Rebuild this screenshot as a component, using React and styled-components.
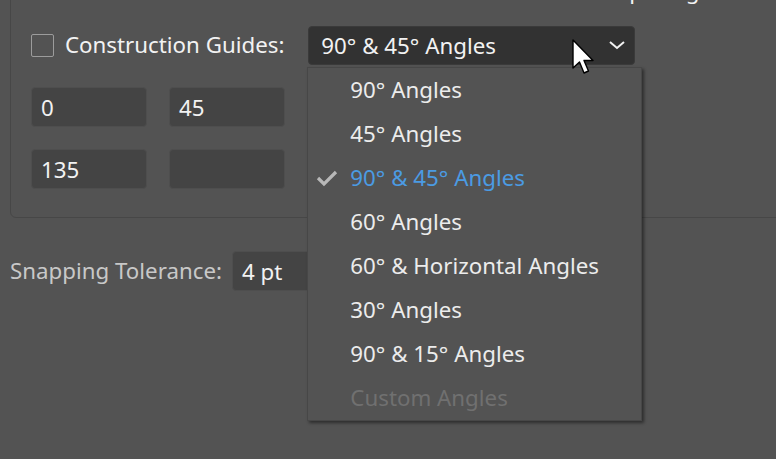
import styled, { createGlobalStyle } from "styled-components";

const GlobalStyle = createGlobalStyle`
  html, body {
    margin: 0;
    padding: 0;
    background: #535353;
    overflow: hidden;
  }
  body {
    font-family: "Noto Sans", "Open Sans", sans-serif;
  }
`;

const Page = styled.div`
  width: 776px;
  height: 459px;
  overflow: hidden;
  background: #535353;
  color: #f0f0f0;
  font-size: 22.3px;
`;

const Group = styled.div`
  margin: -40px 0 0 10px;
  width: 820px;
  border: 1px solid #474747;
  border-radius: 6px;
  padding: 0 0 28px 20px;
  box-sizing: border-box;
`;

const TopRow = styled.div`
  display: flex;
  align-items: center;
  height: 60px;
  margin-bottom: 4px;
  padding-left: 552px;
`;

const GuideRow = styled.div`
  display: flex;
  align-items: center;
  height: 40px;
`;

const Check = styled.span`
  width: 21px;
  height: 21px;
  border: 1px solid #9c9c9c;
  border-radius: 2px;
  box-sizing: content-box;
  flex: none;
  margin-bottom: ${(p) => (p.$raised ? "14px" : "0")};
`;

const Label = styled.span`
  margin-left: ${(p) => (p.$muted ? "0" : "11px")};
  color: ${(p) => (p.$muted ? "#c8c8c8" : "#f2f2f2")};
  white-space: nowrap;
  line-height: 1;
`;

const SelectWrap = styled.div`
  position: relative;
  margin-left: 24px;
`;

const Select = styled.div`
  width: 327px;
  height: 39px;
  box-sizing: border-box;
  display: flex;
  align-items: center;
  justify-content: space-between;
  padding: 0 8px 0 12px;
  background: #323232;
  border: 1px solid #3a3a3a;
  border-radius: 4px;
  color: #f2f2f2;
`;

const Menu = styled.ul`
  position: absolute;
  top: 41px;
  left: -1px;
  width: 333px;
  margin: 0;
  padding: 0;
  list-style: none;
  background: #535353;
  border: 1px solid #474747;
  box-shadow: 2px 2px 3px rgba(0, 0, 0, 0.45);
  z-index: 2;
`;

const Item = styled.li`
  height: 44px;
  display: flex;
  align-items: center;
  padding-left: 42px;
  position: relative;
  color: ${(p) => (p.$selected ? "#4b9be3" : p.$disabled ? "#707070" : "#ececec")};
`;

const Tick = styled.svg`
  position: absolute;
  left: 8px;
  top: 13px;
`;

const Inputs = styled.div`
  display: grid;
  grid-template-columns: repeat(4, 116px);
  gap: 22px 22px;
  margin-top: 22px;
`;

const Field = styled.div`
  height: 40px;
  box-sizing: border-box;
  background: #444444;
  border: 1px solid #4e4e4e;
  border-radius: 4px;
  padding-left: 9px;
  display: flex;
  align-items: center;
  color: #f2f2f2;
  width: ${(p) => p.$w || "auto"};
`;

const ToleranceRow = styled.div`
  display: flex;
  align-items: center;
  margin: 33px 0 0 10px;
  gap: 10px;
`;

const Cursor = styled.svg`
  position: absolute;
  left: 264px;
  top: 13px;
  z-index: 3;
`;

const items = [
  { text: "90° Angles" },
  { text: "45° Angles" },
  { text: "90° & 45° Angles", selected: true },
  { text: "60° Angles" },
  { text: "60° & Horizontal Angles" },
  { text: "30° Angles" },
  { text: "90° & 15° Angles" },
  { text: "Custom Angles", disabled: true },
];

export default function App() {
  return (
    <Page>
      <GlobalStyle />
      <Group>
        <TopRow>
          <Check $raised />
          <Label>Spacing Guides</Label>
        </TopRow>
        <GuideRow>
          <Check />
          <Label>Construction Guides:</Label>
          <SelectWrap>
            <Select>
              <span>90° &amp; 45° Angles</span>
              <svg width="18" height="10" viewBox="0 0 18 10">
                <path d="M2 2 L9 8 L16 2" fill="none" stroke="#f2f2f2" strokeWidth="2" />
              </svg>
            </Select>
            <Cursor width="26" height="40" viewBox="0 0 26 40">
              <path
                d="M1 1 L1 29 L7.5 23 L12 34 L16.5 32 L12 21.5 L21 21.5 Z"
                fill="#ffffff"
                stroke="#000000"
                strokeWidth="1.4"
                strokeLinejoin="round"
              />
            </Cursor>
            <Menu>
              {items.map((it) => (
                <Item key={it.text} $selected={it.selected} $disabled={it.disabled}>
                  {it.selected && (
                    <Tick width="22" height="18" viewBox="0 0 22 18">
                      <path d="M2 9 L8 15 L20 3" fill="none" stroke="#b8b8b8" strokeWidth="3.2" />
                    </Tick>
                  )}
                  {it.text}
                </Item>
              ))}
            </Menu>
          </SelectWrap>
        </GuideRow>
        <Inputs>
          <Field>0</Field>
          <Field>45</Field>
          <Field>90</Field>
          <Field />
          <Field>135</Field>
          <Field />
          <Field />
          <Field />
        </Inputs>
      </Group>
      <ToleranceRow>
        <Label $muted>Snapping Tolerance:</Label>
        <Field $w="116px">4 pt</Field>
      </ToleranceRow>
    </Page>
  );
}
